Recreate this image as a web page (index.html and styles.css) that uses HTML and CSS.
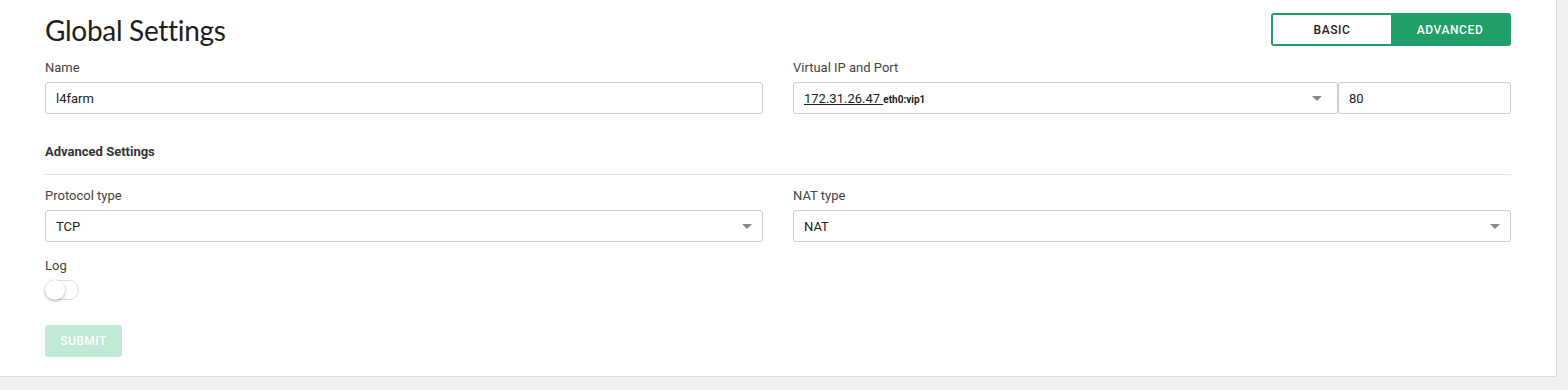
FILE: index.html
```html
<!DOCTYPE html>
<html lang="en">
<head>
  <meta charset="UTF-8">
  <title>Global Settings</title>
  <link rel="stylesheet" href="styles.css">
</head>
<body>
  <div class="card">
    <div class="card-header">
      <h1 class="title">Global Settings</h1>
      <div class="mode-switch">
        <button class="mode-btn">BASIC</button>
        <button class="mode-btn active">ADVANCED</button>
      </div>
    </div>

    <div class="row">
      <div class="field">
        <label class="label">Name</label>
        <div class="input">l4farm</div>
      </div>
      <div class="field">
        <label class="label">Virtual IP and Port</label>
        <div class="vip-group">
          <div class="input select vip-select">
            <span><span class="ip">172.31.26.47 </span><span class="iface">eth0:vip1</span></span>
            <span class="caret"></span>
          </div>
          <div class="input port">80</div>
        </div>
      </div>
    </div>

    <h2 class="section-title">Advanced Settings</h2>

    <div class="row row-tight">
      <div class="field">
        <label class="label">Protocol type</label>
        <div class="input select"><span>TCP</span><span class="caret"></span></div>
      </div>
      <div class="field">
        <label class="label">NAT type</label>
        <div class="input select"><span>NAT</span><span class="caret"></span></div>
      </div>
    </div>

    <div class="field log-field">
      <label class="label">Log</label>
      <div class="toggle"><span class="knob"></span></div>
    </div>

    <button class="submit" disabled>SUBMIT</button>
  </div>
</body>
</html>
```

FILE: styles.css
```css
* {
  box-sizing: border-box;
  margin: 0;
  padding: 0;
}

body {
  background: #f0f0f0;
  font-family: Roboto, "Liberation Sans", sans-serif;
  color: #333;
  width: 1568px;
  height: 390px;
  overflow: hidden;
}

.card {
  width: 1557px;
  height: 377px;
  background: #fff;
  border-right: 1px solid #d6dde3;
  border-bottom: 1px solid #d6dde3;
  padding: 13px 45px 0 45px;
}

.card-header {
  display: flex;
  justify-content: space-between;
  align-items: center;
  height: 33px;
}

.title {
  font-family: Lato, "Noto Sans", sans-serif;
  font-weight: 400;
  font-size: 28px;
  color: #1d1d1d;
  letter-spacing: -0.3px;
  margin-top: 1px;
}

.mode-switch {
  display: flex;
  width: 240px;
  height: 33px;
  border: 2px solid #1f9e66;
  border-radius: 3px;
  overflow: hidden;
}

.mode-btn {
  flex: 1;
  border: none;
  background: #fff;
  font-family: Roboto, sans-serif;
  font-weight: 500;
  font-size: 12px;
  letter-spacing: 0.6px;
  color: #222;
}

.mode-btn.active {
  background: #1f9e66;
  color: #fff;
}

.row {
  display: grid;
  grid-template-columns: 1fr 1fr;
  column-gap: 30px;
  margin-top: 14px;
}

.label {
  display: block;
  font-size: 13px;
  line-height: 16px;
  color: #444;
  margin-bottom: 6px;
}

.input {
  height: 32px;
  border: 1px solid #ccc;
  border-radius: 3px;
  padding: 0 10px;
  font-size: 13px;
  color: #222;
  display: flex;
  align-items: center;
}

.select {
  justify-content: space-between;
}

.caret {
  width: 0;
  height: 0;
  border-left: 5px solid transparent;
  border-right: 5px solid transparent;
  border-top: 5px solid #888;
}

.vip-group {
  display: flex;
}

.vip-select {
  flex: 1;
  padding-left: 10px;
  padding-right: 15px;
}

.ip {
  text-decoration: underline;
  color: #222;
}

.iface {
  font-size: 10px;
  font-weight: 700;
  color: #222;
}

.port {
  width: 173px;
}

.section-title {
  font-size: 13px;
  font-weight: 700;
  line-height: 16px;
  color: #333;
  margin-top: 30px;
  padding-bottom: 14px;
  border-bottom: 1px solid #e3e3e3;
}

.row-tight {
  margin-top: 13px;
}

.log-field {
  margin-top: 16px;
}

.toggle {
  position: relative;
  width: 34px;
  height: 20px;
  border: 1px solid #ddd;
  border-radius: 10px;
  background: #fff;
}

.knob {
  position: absolute;
  left: -1px;
  top: -1px;
  width: 20px;
  height: 20px;
  border-radius: 50%;
  background: #fff;
  box-shadow: 0 1px 3px rgba(0, 0, 0, 0.35);
}

.submit {
  display: block;
  margin-top: 25px;
  width: 77px;
  height: 32px;
  border: none;
  border-radius: 3px;
  background: #c0ead6;
  color: #fff;
  font-family: Roboto, sans-serif;
  font-weight: 500;
  font-size: 12px;
  letter-spacing: 0.5px;
}
```
